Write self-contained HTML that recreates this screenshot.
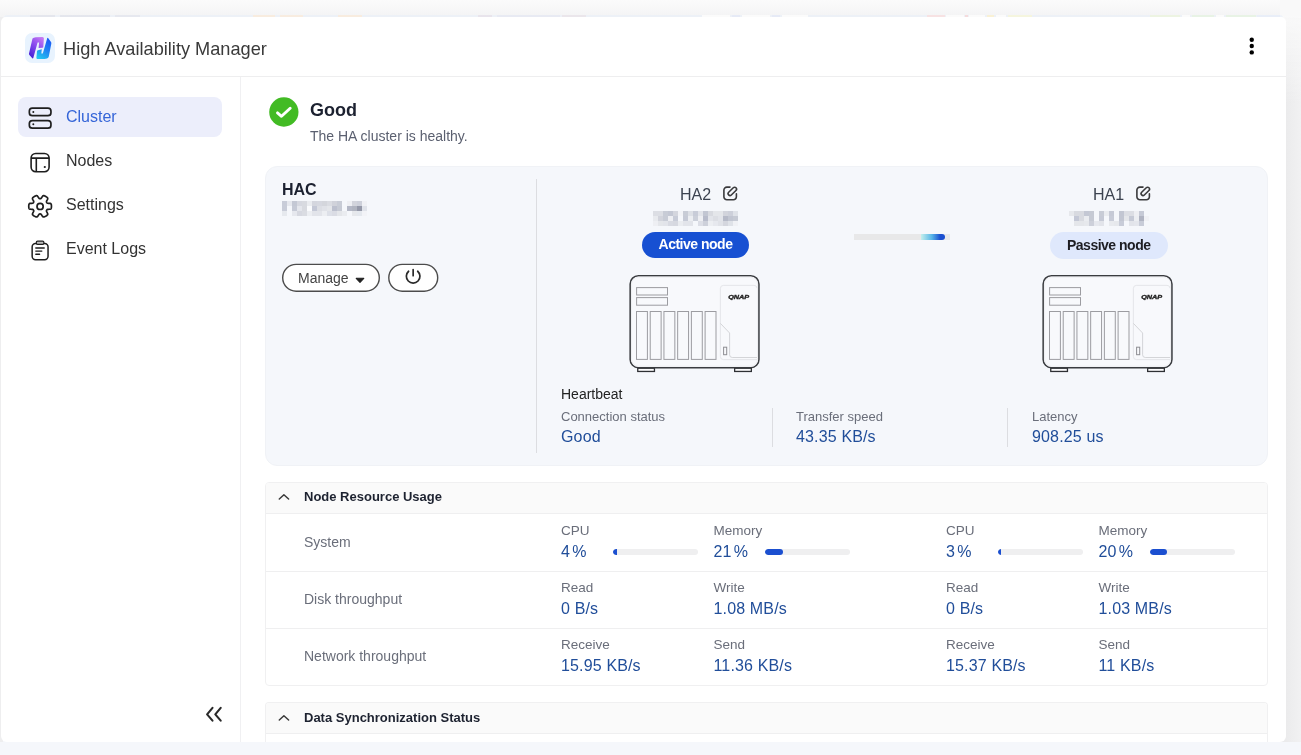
<!DOCTYPE html>
<html>
<head>
<meta charset="utf-8">
<title>High Availability Manager</title>
<style>
*{box-sizing:border-box;margin:0;padding:0}
html,body{width:1301px;height:755px;overflow:hidden}
body{font-family:"Liberation Sans",sans-serif;background:#f5f7fb;position:relative;color:#222}
.abs{position:absolute}
.t{position:absolute;white-space:nowrap;line-height:1}
#topbg{left:0;top:0;width:1301px;height:30px;background:linear-gradient(#fbfbfb,#f4f4f5 55%,#f1f2f6 60%)}
#smudge{left:4px;top:15.300px;width:1279px;height:3px;border-radius:3px 3px 0 0;background:linear-gradient(90deg,#eaf0f9 26px,#dcdfe9 26px,#dcdfe9 51px,#eaf0f9 51px,#eaf0f9 56px,#dde0ea 56px,#dde0ea 106px,#eaf0f9 106px,#eaf0f9 111px,#dfe2ec 111px,#dfe2ec 136px,#eaf0f9 136px,#eaf0f9 249px,#fbe8d4 249px,#fbe8d4 271px,#eaf0f9 271px,#eaf0f9 276px,#fbe9d6 276px,#fbe9d6 299px,#eaf0f9 299px,#eaf0f9 334px,#fbe8d4 334px,#fbe8d4 358px,#eaf0f9 358px,#eaf0f9 474px,#e3dde8 474px,#e3dde8 488px,#eaf0f9 488px,#eaf0f9 493px,#e2e6f2 493px,#e2e6f2 556px,#eaf0f9 556px,#eaf0f9 558px,#e6dfe6 558px,#e6dfe6 582px,#eaf0f9 582px,#eaf0f9 698px,#ffffff 698px,#ffffff 726px,#eaf0f9 726px,#eaf0f9 728px,#dfe6f8 728px,#dfe6f8 736px,#eaf0f9 736px,#eaf0f9 738px,#ffffff 738px,#ffffff 766px,#eaf0f9 766px,#eaf0f9 768px,#dfe6f8 768px,#dfe6f8 776px,#eaf0f9 776px,#eaf0f9 778px,#ffffff 778px,#ffffff 804px,#eaf0f9 804px,#eaf0f9 923px,#f9d9da 923px,#f9d9da 941px,#eaf0f9 941px,#eaf0f9 942px,#ffffff 942px,#ffffff 960px,#eaf0f9 960px,#eaf0f9 961px,#f6cfd0 961px,#f6cfd0 964px,#eaf0f9 964px,#eaf0f9 965px,#ffffff 965px,#ffffff 981px,#eaf0f9 981px,#eaf0f9 983px,#fcf0c4 983px,#fcf0c4 990px,#eaf0f9 990px,#eaf0f9 992px,#ffffff 992px,#ffffff 1002px,#eaf0f9 1002px,#eaf0f9 1004px,#f6f7d2 1004px,#f6f7d2 1028px,#eaf0f9 1028px,#eaf0f9 1146px,#eaf4d8 1146px,#eaf4d8 1176px,#eaf0f9 1176px,#eaf0f9 1178px,#ffffff 1178px,#ffffff 1186px,#eaf0f9 1186px,#eaf0f9 1188px,#e2f3dd 1188px,#e2f3dd 1210px,#eaf0f9 1210px,#eaf0f9 1212px,#ffffff 1212px,#ffffff 1220px,#eaf0f9 1220px,#eaf0f9 1222px,#e2f3dd 1222px,#e2f3dd 1252px,#eaf0f9 1252px,#eaf0f9 1253px,#e4ecfb 1253px,#e4ecfb 1276px,#eaf0f9 1276px);opacity:.65;filter:blur(.1px)}
#leftbg{left:0;top:17px;width:3px;height:725.300px;background:#eeeeef}
#rightbg{left:1280px;top:0;width:21px;height:742.300px;background:linear-gradient(#f9f9f9 2%,rgba(249,249,249,0) 14%),linear-gradient(90deg,#ebebec 28%,#f1f1f2)}
#win{left:1px;top:17px;width:1285px;height:725.300px;background:#fff;border-radius:5px 5px 6px 6px;overflow:hidden}
#inner{left:-1px;top:-17px;width:1301px;height:755px;will-change:transform}
#hdrline{left:1px;top:76px;width:1285px;height:1px;background:#eeeeef}
#sideline{left:240px;top:77px;width:1px;height:665px;background:#f0f0f2}
.nav{position:absolute;left:66px;font-size:16px;color:#333}
.sel{left:18px;top:97px;width:204px;height:40px;background:#eceefb;border-radius:8px}
.card{left:265px;top:166px;width:1003px;height:300px;background:#f5f7fb;border:1px solid #f0f2f6;border-radius:12px}
.vline{position:absolute;width:1px;background:#dcdde1}
.pill{position:absolute;border-radius:14px;font-weight:bold;font-size:14px;letter-spacing:-0.500px;text-align:center}
.btn{position:absolute;height:28px;border:1.200px solid #4a4a4a;border-radius:14px;background:#fff}
.panel{position:absolute;left:265px;width:1003px;background:#fff;border:1px solid #f0f0f1;border-radius:4px;overflow:hidden}
.ph{position:absolute;left:0;top:0;width:100%;height:31px;background:#fafafa;border-bottom:1px solid #efeff0}
.lbl{position:absolute;white-space:nowrap;line-height:1;font-size:13.5px;color:#6a6e7a}
.val{position:absolute;white-space:nowrap;line-height:1;font-size:16px;color:#214e9a;letter-spacing:0.150px}
.bar{position:absolute;height:6px;width:84.500px;border-radius:3px;background:#efeff0;overflow:hidden}
.bar i{position:absolute;left:0;top:0;height:6px;border-radius:3px;background:#1b4fd0}
.hl{position:absolute;left:0;width:1001px;height:1px;background:#efeff0}
.blur{position:absolute;filter:blur(1.2px)}
</style>
</head>
<body>
<div class="abs" id="topbg"></div>
<div class="abs" id="rightbg"></div>
<div class="abs" id="leftbg"></div>
<div class="abs" id="smudge"></div>
<div class="abs" id="win"><div class="abs" id="inner">
<div class="abs" id="hdrline"></div>
<div class="abs" id="sideline"></div>

<!-- header -->
<svg class="abs" style="left:25px;top:33px" width="30" height="30" viewBox="0 0 30 30">
  <defs>
    <linearGradient id="lgA" x1="0.800" y1="0" x2="0.200" y2="1"><stop offset="0" stop-color="#c678f2"/><stop offset="0.450" stop-color="#8a4cee"/><stop offset="1" stop-color="#4420d6"/></linearGradient>
    <linearGradient id="lgB" x1="0.700" y1="0" x2="0.200" y2="1"><stop offset="0" stop-color="#1a5af6"/><stop offset="0.500" stop-color="#1f86f2"/><stop offset="1" stop-color="#22c8f0"/></linearGradient>
  </defs>
  <rect width="30" height="30" rx="7" fill="#e8f3fe"/>
  <path d="M7.500 5.600 Q8.400 4.400 10.800 4.300 L17.400 4 Q19 4 18.900 5.500 L18.300 14 Q18.200 14.800 17.400 14.800 L13.600 15 L14.100 9.600 L12.600 9.600 L8.300 25 Q8 25.800 7.300 25.200 L4.400 22 Q3.800 21.300 4 20.400 Z" fill="url(#lgA)"/>
  <path d="M22.300 5 Q22.700 4.400 23.300 5.200 L26 9 Q26.500 9.800 26.300 10.800 L23.800 23.400 Q23.500 25 22 25.500 L19.500 25.900 L12.300 25.900 Q11.200 25.800 11.400 24.700 L12 18.300 Q12.200 17.500 13 17.300 L16.800 16.300 L16.300 20.600 L17.800 20.600 Z" fill="url(#lgB)"/>
</svg>
<div class="t" id="title" style="left:63px;top:39.800px;font-size:18.200px;color:#3a3a3a">High Availability Manager</div>
<svg class="abs" style="left:1248px;top:36px" width="8" height="20" viewBox="0 0 8 20"><circle cx="3.750" cy="3.700" r="2.200"/><circle cx="3.750" cy="10.050" r="2.200"/><circle cx="3.750" cy="16.400" r="2.200"/></svg>

<!-- sidebar -->
<div class="abs sel"></div>
<div class="t" id="n1" style="left:66px;top:109px;font-size:16px;color:#3565d8">Cluster</div>
<div class="t" id="n2" style="left:66px;top:153px;font-size:16px;color:#333">Nodes</div>
<div class="t" id="n3" style="left:66px;top:197px;font-size:16px;color:#333">Settings</div>
<div class="t" id="n4" style="left:66px;top:241px;font-size:16px;color:#333">Event Logs</div>

<!-- status -->
<svg class="abs" style="left:268.500px;top:96.500px" width="30" height="30" viewBox="0 0 30 30"><circle cx="14.850" cy="15" r="14.650" fill="#42bb24"/><path d="M8.500 15.900 L12.500 19.300 L21.200 11.200" fill="none" stroke="#fff" stroke-width="2.900" stroke-linecap="round" stroke-linejoin="round"/></svg>
<div class="t" id="good" style="left:310px;top:100.500px;font-size:18px;font-weight:bold;color:#1c2130">Good</div>
<div class="t" id="healthy" style="left:310px;top:128.500px;font-size:14px;color:#5b6070">The HA cluster is healthy.</div>

<!-- card -->
<div class="abs card"></div>
<div class="t" id="hac" style="left:282px;top:181.800px;font-size:16px;font-weight:bold;color:#1c2130">HAC</div>
<div class="vline" style="left:536px;top:179px;height:274px"></div>

<svg class="abs" style="left:280px;top:262px" width="162" height="32" viewBox="280 262 162 32"><rect x="282.700" y="264.400" width="96.600" height="26.800" rx="13.400" fill="#fff" stroke="#4c4c4c" stroke-width="1.400"/><rect x="388.800" y="264.400" width="48.900" height="26.800" rx="13.400" fill="#fff" stroke="#4c4c4c" stroke-width="1.400"/></svg>
<div class="t" id="manage" style="left:298px;top:271px;font-size:14px;color:#444">Manage</div>
<svg class="abs" style="left:355.300px;top:277px" width="10" height="7" viewBox="0 0 10 7"><path d="M1.200 1.300 H8.800 L5 5.400Z" fill="#222" stroke="#222" stroke-width="1.100" stroke-linejoin="round"/></svg>
<svg class="abs" style="left:404px;top:268px" width="19" height="18" viewBox="0 0 19 18" fill="none" stroke="#2a2a2a" stroke-width="1.700" stroke-linecap="round"><path d="M9.150 1.650 V7.700"/><path d="M4.600 3.250 A6.800 6.800 0 1 0 13.700 3.250"/></svg>

<div class="t" id="ha2" style="left:680px;top:186.500px;font-size:16px;color:#3c4350">HA2</div>
<div class="t" id="ha1" style="left:1093px;top:186.500px;font-size:16px;color:#3c4350">HA1</div>

<div class="pill" style="left:642px;top:231.500px;width:107px;height:26.500px;background:#1750d2;color:#fff;line-height:25.500px"><span id="act">Active node</span></div>
<div class="pill" style="left:1049.500px;top:232px;width:118.500px;height:26.500px;background:#dfe8fc;color:#1d1d22;line-height:26px"><span id="pas">Passive node</span></div>

<div class="abs" style="left:854px;top:233.500px;width:96px;height:6px;background:#e8e8e9"></div>
<div class="abs" style="left:921px;top:233.500px;width:24px;height:6px;border-radius:0 3px 3px 0;background:linear-gradient(90deg,#c4efec,#58b6e8 45%,#1b4fd0 80%)"></div>

<div class="t" id="hb" style="left:561px;top:387px;font-size:14px;color:#222">Heartbeat</div>
<div class="lbl" id="cs" style="left:561px;top:410px;font-size:13px">Connection status</div>
<div class="val" id="csv" style="left:561px;top:429px">Good</div>
<div class="vline" style="left:772px;top:408px;height:39px"></div>
<div class="lbl" id="ts" style="left:796px;top:410px;font-size:13px">Transfer speed</div>
<div class="val" id="tsv" style="left:796px;top:429px">43.35 KB/s</div>
<div class="vline" style="left:1007px;top:408px;height:39px"></div>
<div class="lbl" id="la" style="left:1032px;top:410px;font-size:13px">Latency</div>
<div class="val" id="lav" style="left:1032px;top:429px">908.25 us</div>

<!-- NAS -->
<svg class="abs" style="left:626px;top:272px" width="138" height="104" viewBox="626 272 138 104" fill="none"><rect x="637.75" y="368.200" width="16.700" height="3.250" fill="#fcfcfd" stroke="#2e3034" stroke-width="1.300"/><rect x="734.65" y="368.200" width="16.700" height="3.250" fill="#fcfcfd" stroke="#2e3034" stroke-width="1.300"/><rect x="630.15" y="275.750" width="128.800" height="91.900" rx="8.200" fill="#f8f9fc" stroke="#3a3c40" stroke-width="1.500"/><rect x="631.6" y="277.200" width="125.900" height="89" rx="6.800" stroke="#eeeff2" stroke-width="1"/><g stroke="#9c9ca1" stroke-width="1"><rect x="636.6" y="287.600" width="30.900" height="7.400"/><rect x="636.6" y="297.600" width="30.900" height="7.600"/><rect x="636.5" y="311.500" width="10.900" height="47.900"/><rect x="650.22" y="311.500" width="10.900" height="47.900"/><rect x="663.94" y="311.500" width="10.900" height="47.900"/><rect x="677.66" y="311.500" width="10.900" height="47.900"/><rect x="691.38" y="311.500" width="10.900" height="47.900"/><rect x="705.1" y="311.500" width="10.900" height="47.900"/></g><path d="M757 288.200 Q757 285.400 754 285.400 H723.400 Q720.400 285.400 720.400 288.400 V356.500 Q720.400 359.600 723.400 359.600 H757" stroke="#e2e3e6" stroke-width="0.900"/><path d="M720.400 323.400 L729.600 333 V354.800 Q729.600 357.500 732.300 357.500 H757" stroke="#cfd0d4" stroke-width="0.900"/><rect x="723.6" y="347.200" width="3.100" height="7.500" stroke="#8e8e93" stroke-width="1"/><text x="728.2" y="299.400" font-family="Liberation Sans, sans-serif" font-size="5.800" font-weight="bold" font-style="italic" fill="#222" stroke="#222" stroke-width="0.350" textLength="21" lengthAdjust="spacingAndGlyphs">QNAP</text></svg>
<svg class="abs" style="left:1039.3px;top:272px" width="138" height="104" viewBox="626 272 138 104" fill="none"><rect x="637.75" y="368.200" width="16.700" height="3.250" fill="#fcfcfd" stroke="#2e3034" stroke-width="1.300"/><rect x="734.65" y="368.200" width="16.700" height="3.250" fill="#fcfcfd" stroke="#2e3034" stroke-width="1.300"/><rect x="630.15" y="275.750" width="128.800" height="91.900" rx="8.200" fill="#f8f9fc" stroke="#3a3c40" stroke-width="1.500"/><rect x="631.6" y="277.200" width="125.900" height="89" rx="6.800" stroke="#eeeff2" stroke-width="1"/><g stroke="#9c9ca1" stroke-width="1"><rect x="636.6" y="287.600" width="30.900" height="7.400"/><rect x="636.6" y="297.600" width="30.900" height="7.600"/><rect x="636.5" y="311.500" width="10.900" height="47.900"/><rect x="650.22" y="311.500" width="10.900" height="47.900"/><rect x="663.94" y="311.500" width="10.900" height="47.900"/><rect x="677.66" y="311.500" width="10.900" height="47.900"/><rect x="691.38" y="311.500" width="10.900" height="47.900"/><rect x="705.1" y="311.500" width="10.900" height="47.900"/></g><path d="M757 288.200 Q757 285.400 754 285.400 H723.400 Q720.400 285.400 720.400 288.400 V356.500 Q720.400 359.600 723.400 359.600 H757" stroke="#e2e3e6" stroke-width="0.900"/><path d="M720.400 323.400 L729.600 333 V354.800 Q729.600 357.500 732.300 357.500 H757" stroke="#cfd0d4" stroke-width="0.900"/><rect x="723.6" y="347.200" width="3.100" height="7.500" stroke="#8e8e93" stroke-width="1"/><text x="728.2" y="299.400" font-family="Liberation Sans, sans-serif" font-size="5.800" font-weight="bold" font-style="italic" fill="#222" stroke="#222" stroke-width="0.350" textLength="21" lengthAdjust="spacingAndGlyphs">QNAP</text></svg>
<svg class="abs" style="left:279.9px;top:198.8px;filter:blur(0.7px)" width="89" height="19" viewBox="-2 -2 89 19" shape-rendering="crispEdges"><rect x="0" y="0" width="5" height="5" fill="#c8ccd8"/><rect x="5" y="0" width="5" height="5" fill="#e6e8ee"/><rect x="10" y="0" width="5" height="5" fill="#c4c8d4"/><rect x="15" y="0" width="5" height="5" fill="#d6d8e0"/><rect x="20" y="0" width="5" height="5" fill="#d8dae0"/><rect x="25" y="0" width="5" height="5" fill="#eaecf0"/><rect x="30" y="0" width="5" height="5" fill="#d4d6de"/><rect x="35" y="0" width="5" height="5" fill="#d6d8e0"/><rect x="40" y="0" width="5" height="5" fill="#d4d6dc"/><rect x="45" y="0" width="5" height="5" fill="#dadce2"/><rect x="50" y="0" width="5" height="5" fill="#d0d2da"/><rect x="55" y="0" width="5" height="5" fill="#c8ccd6"/><rect x="65" y="0" width="5" height="5" fill="#eeeff3"/><rect x="70" y="0" width="5" height="5" fill="#d2d4dc"/><rect x="75" y="0" width="5" height="5" fill="#cdd0da"/><rect x="80" y="0" width="5" height="5" fill="#f0f1f5"/><rect x="0" y="5" width="5" height="5" fill="#c8ccd8"/><rect x="10" y="5" width="5" height="5" fill="#c6cad6"/><rect x="15" y="5" width="5" height="5" fill="#e4e6ec"/><rect x="20" y="5" width="5" height="5" fill="#d8dae0"/><rect x="25" y="5" width="5" height="5" fill="#fafbfd"/><rect x="30" y="5" width="5" height="5" fill="#c4c8d6"/><rect x="35" y="5" width="5" height="5" fill="#dcdee4"/><rect x="40" y="5" width="5" height="5" fill="#e0e2e8"/><rect x="45" y="5" width="5" height="5" fill="#e4e6ea"/><rect x="50" y="5" width="5" height="5" fill="#bcc0ce"/><rect x="55" y="5" width="5" height="5" fill="#c6cad4"/><rect x="65" y="5" width="5" height="5" fill="#b4b8c6"/><rect x="70" y="5" width="5" height="5" fill="#b0b4c0"/><rect x="75" y="5" width="5" height="5" fill="#9498a8"/><rect x="80" y="5" width="5" height="5" fill="#e0e3ea"/><rect x="0" y="10" width="5" height="5" fill="#e6e9ee"/><rect x="10" y="10" width="5" height="5" fill="#e6e8ee"/><rect x="15" y="10" width="5" height="5" fill="#d6d8e0"/><rect x="20" y="10" width="5" height="5" fill="#dadce2"/><rect x="25" y="10" width="5" height="5" fill="#eceef2"/><rect x="30" y="10" width="5" height="5" fill="#e2e4ea"/><rect x="35" y="10" width="5" height="5" fill="#e2e4ea"/><rect x="40" y="10" width="5" height="5" fill="#eceef2"/><rect x="45" y="10" width="5" height="5" fill="#dde0e8"/><rect x="50" y="10" width="5" height="5" fill="#dadce4"/><rect x="55" y="10" width="5" height="5" fill="#e4e6ea"/><rect x="60" y="10" width="5" height="5" fill="#eaecf0"/><rect x="70" y="10" width="5" height="5" fill="#e6e8ec"/><rect x="75" y="10" width="5" height="5" fill="#e4e8ee"/><rect x="80" y="10" width="5" height="5" fill="#f2f3f7"/></svg>
<svg class="abs" style="left:651.1px;top:208.8px;filter:blur(0.7px)" width="89" height="19" viewBox="-2 -2 89 19" shape-rendering="crispEdges"><rect x="0" y="0" width="5" height="5" fill="#dcdee4"/><rect x="5" y="0" width="5" height="5" fill="#dcdee4"/><rect x="10" y="0" width="5" height="5" fill="#c8ccd6"/><rect x="15" y="0" width="5" height="5" fill="#c4c8d4"/><rect x="20" y="0" width="5" height="5" fill="#d4d6de"/><rect x="25" y="0" width="5" height="5" fill="#f2f3f7"/><rect x="30" y="0" width="5" height="5" fill="#c8ccd6"/><rect x="35" y="0" width="5" height="5" fill="#dde0e6"/><rect x="40" y="0" width="5" height="5" fill="#c8ccd8"/><rect x="45" y="0" width="5" height="5" fill="#e2e4ea"/><rect x="50" y="0" width="5" height="5" fill="#c2c6d2"/><rect x="55" y="0" width="5" height="5" fill="#d8dae0"/><rect x="60" y="0" width="5" height="5" fill="#e4e6ea"/><rect x="65" y="0" width="5" height="5" fill="#e4e6ea"/><rect x="70" y="0" width="5" height="5" fill="#d2d4dc"/><rect x="75" y="0" width="5" height="5" fill="#cdd0da"/><rect x="80" y="0" width="5" height="5" fill="#dfe2e8"/><rect x="0" y="5" width="5" height="5" fill="#e8eaee"/><rect x="5" y="5" width="5" height="5" fill="#d2d4dc"/><rect x="10" y="5" width="5" height="5" fill="#c8ccd6"/><rect x="15" y="5" width="5" height="5" fill="#eeeff3"/><rect x="20" y="5" width="5" height="5" fill="#c8ccd8"/><rect x="30" y="5" width="5" height="5" fill="#c6cad6"/><rect x="35" y="5" width="5" height="5" fill="#eceef2"/><rect x="40" y="5" width="5" height="5" fill="#ccd0da"/><rect x="45" y="5" width="5" height="5" fill="#eeeff3"/><rect x="50" y="5" width="5" height="5" fill="#b8bccb"/><rect x="55" y="5" width="5" height="5" fill="#e2e4ea"/><rect x="60" y="5" width="5" height="5" fill="#dcdee4"/><rect x="65" y="5" width="5" height="5" fill="#e2e4ea"/><rect x="70" y="5" width="5" height="5" fill="#b6bac8"/><rect x="75" y="5" width="5" height="5" fill="#c2c6d2"/><rect x="80" y="5" width="5" height="5" fill="#c6cad4"/><rect x="0" y="10" width="5" height="5" fill="#eeeff3"/><rect x="5" y="10" width="5" height="5" fill="#e4e6ea"/><rect x="10" y="10" width="5" height="5" fill="#e2e4ea"/><rect x="15" y="10" width="5" height="5" fill="#d8dae2"/><rect x="20" y="10" width="5" height="5" fill="#d6d8e0"/><rect x="25" y="10" width="5" height="5" fill="#eaecf0"/><rect x="30" y="10" width="5" height="5" fill="#e2e4ea"/><rect x="35" y="10" width="5" height="5" fill="#e2e4ea"/><rect x="45" y="10" width="5" height="5" fill="#dcdee6"/><rect x="50" y="10" width="5" height="5" fill="#cdd0da"/><rect x="55" y="10" width="5" height="5" fill="#eceef2"/><rect x="60" y="10" width="5" height="5" fill="#e6e8ee"/><rect x="65" y="10" width="5" height="5" fill="#e0e2e8"/><rect x="70" y="10" width="5" height="5" fill="#d4d6de"/><rect x="75" y="10" width="5" height="5" fill="#dfe2e8"/><rect x="80" y="10" width="5" height="5" fill="#f0f1f5"/></svg>
<svg class="abs" style="left:1067.2px;top:208.8px;filter:blur(0.7px)" width="84" height="19" viewBox="-2 -2 84 19" shape-rendering="crispEdges"><rect x="0" y="0" width="5" height="5" fill="#e6e8ec"/><rect x="5" y="0" width="5" height="5" fill="#d8dae0"/><rect x="10" y="0" width="5" height="5" fill="#d8dae0"/><rect x="15" y="0" width="5" height="5" fill="#c4c8d4"/><rect x="20" y="0" width="5" height="5" fill="#c6cad4"/><rect x="30" y="0" width="5" height="5" fill="#c8ccd6"/><rect x="35" y="0" width="5" height="5" fill="#eaecf0"/><rect x="40" y="0" width="5" height="5" fill="#c6cad6"/><rect x="50" y="0" width="5" height="5" fill="#c2c6d2"/><rect x="55" y="0" width="5" height="5" fill="#dcdee4"/><rect x="60" y="0" width="5" height="5" fill="#dcdee4"/><rect x="65" y="0" width="5" height="5" fill="#eeeff3"/><rect x="70" y="0" width="5" height="5" fill="#c6cad6"/><rect x="5" y="5" width="5" height="5" fill="#c4c8d6"/><rect x="10" y="5" width="5" height="5" fill="#d8dae0"/><rect x="15" y="5" width="5" height="5" fill="#eaecf0"/><rect x="20" y="5" width="5" height="5" fill="#c6cad4"/><rect x="30" y="5" width="5" height="5" fill="#c6cad6"/><rect x="40" y="5" width="5" height="5" fill="#c8ccd8"/><rect x="50" y="5" width="5" height="5" fill="#c2c6d2"/><rect x="55" y="5" width="5" height="5" fill="#e4e6ea"/><rect x="60" y="5" width="5" height="5" fill="#c6cad6"/><rect x="65" y="5" width="5" height="5" fill="#eceef2"/><rect x="70" y="5" width="5" height="5" fill="#b0b4c2"/><rect x="75" y="5" width="5" height="5" fill="#f0f1f5"/><rect x="5" y="10" width="5" height="5" fill="#e4e6ea"/><rect x="10" y="10" width="5" height="5" fill="#e4e6ea"/><rect x="15" y="10" width="5" height="5" fill="#e6e8ec"/><rect x="20" y="10" width="5" height="5" fill="#cdd0da"/><rect x="25" y="10" width="5" height="5" fill="#e6e8ee"/><rect x="30" y="10" width="5" height="5" fill="#e2e4ea"/><rect x="40" y="10" width="5" height="5" fill="#e8eaee"/><rect x="45" y="10" width="5" height="5" fill="#e6e8ec"/><rect x="50" y="10" width="5" height="5" fill="#c8ccd8"/><rect x="60" y="10" width="5" height="5" fill="#e2e4ea"/><rect x="65" y="10" width="5" height="5" fill="#e4e6ec"/><rect x="70" y="10" width="5" height="5" fill="#c8ccd8"/></svg>
<!-- /NAS -->
<!-- panel 1 -->
<div class="panel" style="top:482px;height:203.800px">
  <div class="ph"></div>
  <div class="hl" style="top:87.500px"></div>
  <div class="hl" style="top:145px"></div>
</div>
<div class="t" id="nru" style="left:304px;top:490.200px;font-size:13px;font-weight:bold;color:#1d2230">Node Resource Usage</div>
<div class="lbl" id="sys" style="left:304px;top:535px;font-size:14px">System</div>
<div class="lbl" id="dsk" style="left:304px;top:592px;font-size:14px">Disk throughput</div>
<div class="lbl" id="net" style="left:304px;top:649px;font-size:14px">Network throughput</div>

<div class="lbl" id="l00" style="left:561px;top:524.4px">CPU</div>
<div class="val" id="v00" style="left:561px;top:544px;word-spacing:-2.500px">4 %</div>
<div class="lbl" id="l01" style="left:713.5px;top:524.4px">Memory</div>
<div class="val" id="v01" style="left:713.5px;top:544px;word-spacing:-2.500px">21 %</div>
<div class="lbl" id="l02" style="left:946px;top:524.4px">CPU</div>
<div class="val" id="v02" style="left:946px;top:544px;word-spacing:-2.500px">3 %</div>
<div class="lbl" id="l03" style="left:1098.5px;top:524.4px">Memory</div>
<div class="val" id="v03" style="left:1098.5px;top:544px;word-spacing:-2.500px">20 %</div>
<div class="lbl" id="l10" style="left:561px;top:581.4px">Read</div>
<div class="val" id="v10" style="left:561px;top:601px">0 B/s</div>
<div class="lbl" id="l11" style="left:713.5px;top:581.4px">Write</div>
<div class="val" id="v11" style="left:713.5px;top:601px">1.08 MB/s</div>
<div class="lbl" id="l12" style="left:946px;top:581.4px">Read</div>
<div class="val" id="v12" style="left:946px;top:601px">0 B/s</div>
<div class="lbl" id="l13" style="left:1098.5px;top:581.4px">Write</div>
<div class="val" id="v13" style="left:1098.5px;top:601px">1.03 MB/s</div>
<div class="lbl" id="l20" style="left:561px;top:638.4px">Receive</div>
<div class="val" id="v20" style="left:561px;top:658px">15.95 KB/s</div>
<div class="lbl" id="l21" style="left:713.5px;top:638.4px">Send</div>
<div class="val" id="v21" style="left:713.5px;top:658px">11.36 KB/s</div>
<div class="lbl" id="l22" style="left:946px;top:638.4px">Receive</div>
<div class="val" id="v22" style="left:946px;top:658px">15.37 KB/s</div>
<div class="lbl" id="l23" style="left:1098.5px;top:638.4px">Send</div>
<div class="val" id="v23" style="left:1098.5px;top:658px">11 KB/s</div>
<div class="bar" style="left:613px;top:548.8px"><i style="width:3.600px;border-radius:3px 0 0 3px"></i></div>
<div class="bar" style="left:765.2px;top:548.8px"><i style="width:18px"></i></div>
<div class="bar" style="left:998px;top:548.8px"><i style="width:3px;border-radius:3px 0 0 3px"></i></div>
<div class="bar" style="left:1150.4px;top:548.8px"><i style="width:17px"></i></div>
<!-- panel 2 -->
<div class="panel" style="top:701.600px;height:60px;border-bottom:none">
  <div class="ph"></div>
</div>
<div class="t" id="dss" style="left:304px;top:711.200px;font-size:13px;font-weight:bold;color:#1d2230">Data Synchronization Status</div>
<!-- ICONS -->
<svg class="abs" style="left:26px;top:105px" width="28" height="26" viewBox="26 105 28 26" fill="none" stroke="#1e1e1e" stroke-width="1.7"><rect x="29.35" y="108.05" width="21.6" height="7.6" rx="3"/><rect x="29.35" y="120.55" width="21.6" height="7.6" rx="3"/><circle cx="33.3" cy="111.9" r="1" fill="#1e1e1e" stroke="none"/><circle cx="33.3" cy="124.3" r="1" fill="#1e1e1e" stroke="none"/></svg>
<svg class="abs" style="left:28px;top:150px" width="24" height="25" viewBox="28 150 24 25" fill="none" stroke="#1e1e1e" stroke-width="1.6"><rect x="31.1" y="153.5" width="18" height="18.2" rx="4.6"/><path d="M31 158.1 H49.2 M36.3 158.1 V171.8"/><circle cx="44.8" cy="167" r="1.1" fill="#1e1e1e" stroke="none"/></svg>
<svg class="abs" style="left:27px;top:193px" width="27" height="27" viewBox="27 193 27 27" fill="none" stroke="#1e1e1e" stroke-width="1.7" stroke-linejoin="round"><path d="M51.45 206.3 L51.44 206.7 L51.42 207.09 L51.38 207.49 L51.32 207.88 L51.23 208.26 L51.07 208.63 L50.77 208.96 L50.18 209.19 L49.26 209.27 L48.31 209.29 L47.66 209.35 L47.28 209.5 L47.04 209.69 L46.87 209.9 L46.73 210.12 L46.6 210.36 L46.5 210.62 L46.46 210.92 L46.53 211.32 L46.8 211.92 L47.25 212.74 L47.64 213.58 L47.74 214.21 L47.61 214.64 L47.36 214.96 L47.08 215.23 L46.77 215.48 L46.45 215.71 L46.11 215.92 L45.78 216.13 L45.43 216.32 L45.07 216.5 L44.71 216.66 L44.34 216.81 L43.96 216.92 L43.57 216.97 L43.13 216.87 L42.64 216.47 L42.1 215.72 L41.62 214.91 L41.23 214.38 L40.92 214.12 L40.64 214 L40.37 213.96 L40.1 213.95 L39.83 213.96 L39.56 214 L39.28 214.12 L38.97 214.38 L38.58 214.91 L38.1 215.72 L37.56 216.47 L37.07 216.87 L36.63 216.97 L36.24 216.92 L35.86 216.81 L35.49 216.66 L35.13 216.5 L34.77 216.32 L34.43 216.13 L34.09 215.92 L33.75 215.71 L33.43 215.48 L33.12 215.23 L32.84 214.96 L32.59 214.64 L32.46 214.21 L32.56 213.58 L32.95 212.74 L33.4 211.92 L33.67 211.32 L33.74 210.92 L33.7 210.62 L33.6 210.36 L33.47 210.12 L33.33 209.9 L33.16 209.69 L32.92 209.5 L32.54 209.35 L31.89 209.29 L30.94 209.27 L30.02 209.19 L29.43 208.96 L29.13 208.63 L28.97 208.26 L28.88 207.88 L28.82 207.49 L28.78 207.09 L28.76 206.7 L28.75 206.3 L28.76 205.9 L28.78 205.51 L28.82 205.11 L28.88 204.72 L28.97 204.34 L29.13 203.97 L29.43 203.64 L30.02 203.41 L30.94 203.33 L31.89 203.31 L32.54 203.25 L32.92 203.1 L33.16 202.91 L33.33 202.7 L33.47 202.48 L33.6 202.24 L33.7 201.98 L33.74 201.68 L33.67 201.28 L33.4 200.68 L32.95 199.86 L32.56 199.02 L32.46 198.39 L32.59 197.96 L32.84 197.64 L33.12 197.37 L33.43 197.12 L33.75 196.89 L34.09 196.68 L34.42 196.47 L34.77 196.28 L35.13 196.1 L35.49 195.94 L35.86 195.79 L36.24 195.68 L36.63 195.63 L37.07 195.73 L37.56 196.13 L38.1 196.88 L38.58 197.69 L38.97 198.22 L39.28 198.48 L39.56 198.6 L39.83 198.64 L40.1 198.65 L40.37 198.64 L40.64 198.6 L40.92 198.48 L41.23 198.22 L41.62 197.69 L42.1 196.88 L42.64 196.13 L43.13 195.73 L43.57 195.63 L43.96 195.68 L44.34 195.79 L44.71 195.94 L45.07 196.1 L45.43 196.28 L45.78 196.47 L46.11 196.68 L46.45 196.89 L46.77 197.12 L47.08 197.37 L47.36 197.64 L47.61 197.96 L47.74 198.39 L47.64 199.02 L47.25 199.86 L46.8 200.68 L46.53 201.28 L46.46 201.68 L46.5 201.98 L46.6 202.24 L46.73 202.47 L46.87 202.7 L47.04 202.91 L47.28 203.1 L47.66 203.25 L48.31 203.31 L49.26 203.33 L50.18 203.41 L50.77 203.64 L51.07 203.97 L51.23 204.34 L51.32 204.72 L51.38 205.11 L51.42 205.51 L51.44 205.9Z"/><circle cx="40.1" cy="206.4" r="3.1"/></svg>
<svg class="abs" style="left:29px;top:239px" width="22" height="24" viewBox="29 239 22 24" fill="none" stroke="#1e1e1e" stroke-width="1.5" stroke-linecap="round"><rect x="32.15" y="243.45" width="15.9" height="16.3" rx="3.4"/><rect x="36.3" y="241.2" width="7.6" height="3.2" rx="1.3" fill="#bdbdbd" stroke-width="1.2"/><path d="M35.8 248 H44.2 M35.8 251.1 H41.8 M35.8 254.2 H39.6" stroke-width="1.4"/></svg>
<svg class="abs" style="left:203px;top:704px" width="22" height="21" viewBox="203 704 22 21" fill="none" stroke="#2a2a2a" stroke-width="2.1" stroke-linecap="round" stroke-linejoin="round"><path d="M212.5 707.9 L207.1 714.4 L212.5 720.6 M220.7 707.9 L215.3 714.4 L220.7 720.6"/></svg>
<svg class="abs" style="left:276px;top:490px" width="16" height="13" viewBox="276 490 16 13" fill="none" stroke="#3a3a3a" stroke-width="1.5" stroke-linecap="round" stroke-linejoin="round"><path d="M279.3 499 L283.9 494.7 L288.6 499"/></svg>
<svg class="abs" style="left:276px;top:711px" width="16" height="13" viewBox="276 490 16 13" fill="none" stroke="#3a3a3a" stroke-width="1.5" stroke-linecap="round" stroke-linejoin="round"><path d="M279.3 499 L283.9 494.7 L288.6 499"/></svg>
<svg class="abs" style="left:722px;top:185px" width="17" height="17" viewBox="-1 -1 17 17" fill="none" stroke="#3a3a3c" stroke-width="1.6" stroke-linecap="round" stroke-linejoin="round"><path d="M7 1.1 H3.9 a3 3 0 0 0 -3 3 V10.8 a3 3 0 0 0 3 3 H10.4 a3 3 0 0 0 3 -3 V7.8"/><path d="M8.33 8.96 L12.93 4.46 A1.9 1.9 0 0 0 10.27 1.74 L5.67 6.24 A1.9 1.9 0 0 0 8.33 8.96Z"/></svg>
<svg class="abs" style="left:1135.3px;top:185px" width="17" height="17" viewBox="-1 -1 17 17" fill="none" stroke="#3a3a3c" stroke-width="1.6" stroke-linecap="round" stroke-linejoin="round"><path d="M7 1.1 H3.9 a3 3 0 0 0 -3 3 V10.8 a3 3 0 0 0 3 3 H10.4 a3 3 0 0 0 3 -3 V7.8"/><path d="M8.33 8.96 L12.93 4.46 A1.9 1.9 0 0 0 10.27 1.74 L5.67 6.24 A1.9 1.9 0 0 0 8.33 8.96Z"/></svg>
<!-- /ICONS -->
</div></div>
</body>
</html>
